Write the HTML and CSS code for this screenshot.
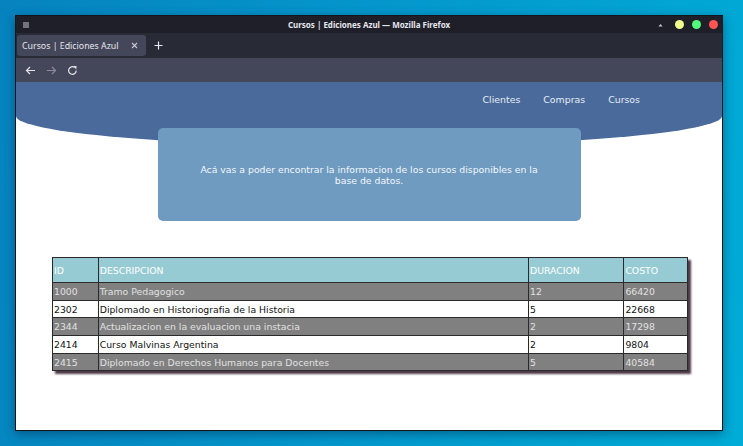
FILE: index.html
```html
<!DOCTYPE html>
<html lang="es">
<head>
<meta charset="utf-8">
<title>Cursos | Ediciones Azul</title>
<link rel="stylesheet" href="styles.css">
</head>
<body>
<div class="window">
  <div class="titlebar">
    <svg class="menu-icon" width="6" height="6" viewBox="0 0 6 6"><rect x="0" y="0.5" width="6" height="1" fill="#c8c8d0"/><rect x="0" y="2.5" width="6" height="1" fill="#c8c8d0"/><rect x="0" y="4.5" width="6" height="1" fill="#c8c8d0"/></svg>
    <div class="title">Cursos | Ediciones Azul — Mozilla Firefox</div>
    <div class="wbuttons">
      <svg class="minimize" width="5" height="4" viewBox="0 0 5 4"><path d="M0.5 3.5 L2.5 1 L4.5 3.5 Z" fill="#c8c8d0"/></svg>
      <span class="dot yellow"></span>
      <span class="dot green"></span>
      <span class="dot red"></span>
    </div>
  </div>
  <div class="tabbar">
    <div class="tab">
      <span class="tab-title">Cursos | Ediciones Azul</span>
      <svg class="tab-close" width="7" height="7" viewBox="0 0 7 7"><path d="M1 1 L6 6 M6 1 L1 6" stroke="#c8c8d0" stroke-width="1.1"/></svg>
    </div>
    <svg class="newtab" width="9" height="9" viewBox="0 0 9 9"><path d="M4.5 0.5 V8.5 M0.5 4.5 H8.5" stroke="#e8e8ee" stroke-width="1.2"/></svg>
  </div>
  <div class="navbar">
    <svg class="nav-icon" width="11" height="11" viewBox="0 0 11 11"><path d="M10 5.5 H1.5 M5 2 L1.5 5.5 L5 9" fill="none" stroke="#e4e4ea" stroke-width="1.2"/></svg>
    <svg class="nav-icon dim" width="11" height="11" viewBox="0 0 11 11"><path d="M1 5.5 H9.5 M6 2 L9.5 5.5 L6 9" fill="none" stroke="#8a8c9a" stroke-width="1.2"/></svg>
    <svg class="nav-icon" width="11" height="11" viewBox="0 0 11 11"><path d="M9.2 5.5 A3.8 3.8 0 1 1 7.6 2.4" fill="none" stroke="#e4e4ea" stroke-width="1.2"/><path d="M6.4 0.8 L9.6 1.2 L9.2 4.4 Z" fill="#e4e4ea"/></svg>
  </div>
  <div class="content">
    <header class="hero">
      <nav class="links">
        <a>Clientes</a>
        <a>Compras</a>
        <a>Cursos</a>
      </nav>
    </header>
    <div class="info">
      <p>Acá vas a poder encontrar la informacion de los cursos disponibles en la base de datos.</p>
    </div>
    <table class="courses">
      <thead>
        <tr><th class="c-id">ID</th><th class="c-desc">DESCRIPCION</th><th class="c-dur">DURACION</th><th class="c-cost">COSTO</th></tr>
      </thead>
      <tbody>
        <tr><td>1000</td><td>Tramo Pedagogico</td><td>12</td><td>66420</td></tr>
        <tr><td>2302</td><td>Diplomado en Historiografia de la Historia</td><td>5</td><td>22668</td></tr>
        <tr><td>2344</td><td>Actualizacion en la evaluacion una instacia</td><td>2</td><td>17298</td></tr>
        <tr><td>2414</td><td>Curso Malvinas Argentina</td><td>2</td><td>9804</td></tr>
        <tr><td>2415</td><td>Diplomado en Derechos Humanos para Docentes</td><td>5</td><td>40584</td></tr>
      </tbody>
    </table>
  </div>
</div>
</body>
</html>
```
FILE: styles.css
```css
html, body {
  margin: 0;
  padding: 0;
}
body {
  width: 743px;
  height: 446px;
  overflow: hidden;
  background: linear-gradient(100deg, #0683bf 0%, #0496cc 45%, #01acd7 100%);
  font-family: "DejaVu Sans", sans-serif;
  padding-top: 15px;
  padding-left: 15px;
  box-sizing: border-box;
}
.window {
  width: 708px;
  height: 416px;
  box-sizing: border-box;
  border: 1px solid #14151c;
  background: #1e1f29;
  display: flex;
  flex-direction: column;
  box-shadow: 0 3px 10px rgba(0, 30, 60, 0.45);
}
.titlebar {
  height: 17px;
  flex: none;
  display: flex;
  align-items: center;
  background: #1e1f29;
  position: relative;
}
.menu-icon {
  margin-left: 7px;
}
.title {
  position: absolute;
  left: 0;
  right: 0;
  text-align: center;
  font-family: "Noto Sans", sans-serif;
  font-weight: bold;
  font-size: 8px;
  color: #e6e6ec;
  top: 3px;
}
.wbuttons {
  margin-left: auto;
  display: flex;
  align-items: center;
  gap: 8px;
  margin-right: 4px;
}
.minimize {
  margin-right: 4px;
}
.dot {
  width: 9px;
  height: 9px;
  border-radius: 50%;
  display: block;
}
.yellow { background: #f1fa8c; }
.green { background: #50fa7b; }
.red { background: #ff5555; }
.tabbar {
  height: 25px;
  flex: none;
  background: #282a36;
  display: flex;
  align-items: center;
}
.tab {
  margin-left: 1px;
  width: 129px;
  height: 21px;
  box-sizing: border-box;
  background: #44475a;
  border-radius: 3px;
  display: flex;
  align-items: center;
  padding: 0 5px 0 5px;
}
.tab-title {
  font-family: "Noto Sans", sans-serif;
  font-size: 8.8px;
  color: #e4e4ea;
  flex: 1;
  white-space: nowrap;
}
.tab-close {
  margin-right: 3px;
}
.newtab {
  margin-left: 8px;
}
.navbar {
  height: 24px;
  flex: none;
  background: #44475a;
  display: flex;
  align-items: center;
  gap: 10px;
  padding-left: 9px;
}
.content {
  flex: 1;
  background: #ffffff;
  display: flex;
  flex-direction: column;
  overflow: hidden;
}
.hero {
  height: 64px;
  flex: none;
  background: #4a6a9b;
  border-bottom-left-radius: 50% 30px;
  border-bottom-right-radius: 50% 30px;
  display: flex;
  justify-content: flex-end;
  align-items: flex-start;
}
.links {
  display: flex;
  gap: 23px;
  margin-right: 82px;
  margin-top: 12px;
}
.links a {
  color: #e6ecf4;
  font-size: 9.4px;
}
.info {
  position: relative;
  margin: -18px auto 0;
  width: 423px;
  height: 93px;
  box-sizing: border-box;
  background: #6f9bc1;
  border-radius: 5px;
  display: flex;
  align-items: center;
  justify-content: center;
  padding: 0 40px;
}
.info p {
  margin: 0;
  color: #f2f6fa;
  font-size: 9.3px;
  line-height: 11px;
  text-align: center;
}
.courses {
  margin: 36px 0 0 36px;
  width: 636px;
  border-collapse: collapse;
  font-size: 9.3px;
  box-shadow: 3px 3px 2px #4e3845;
}
.courses th, .courses td {
  border: 1px solid #2a2a2a;
  padding: 0 0 0 1px;
  text-align: left;
  font-weight: normal;
  white-space: nowrap;
}
.courses th {
  background: #96cbd3;
  color: #ffffff;
  height: 24px;
}
.courses td {
  height: 16.7px;
}
.courses tbody tr:nth-child(odd) td {
  background: #808080;
  color: #e0e0e0;
}
.courses tbody tr:nth-child(even) td {
  background: #ffffff;
  color: #111111;
}
.c-id { width: 44px; }
.c-desc { width: 431px; }
.c-dur { width: 94px; }
.c-cost { width: 62px; }
```
